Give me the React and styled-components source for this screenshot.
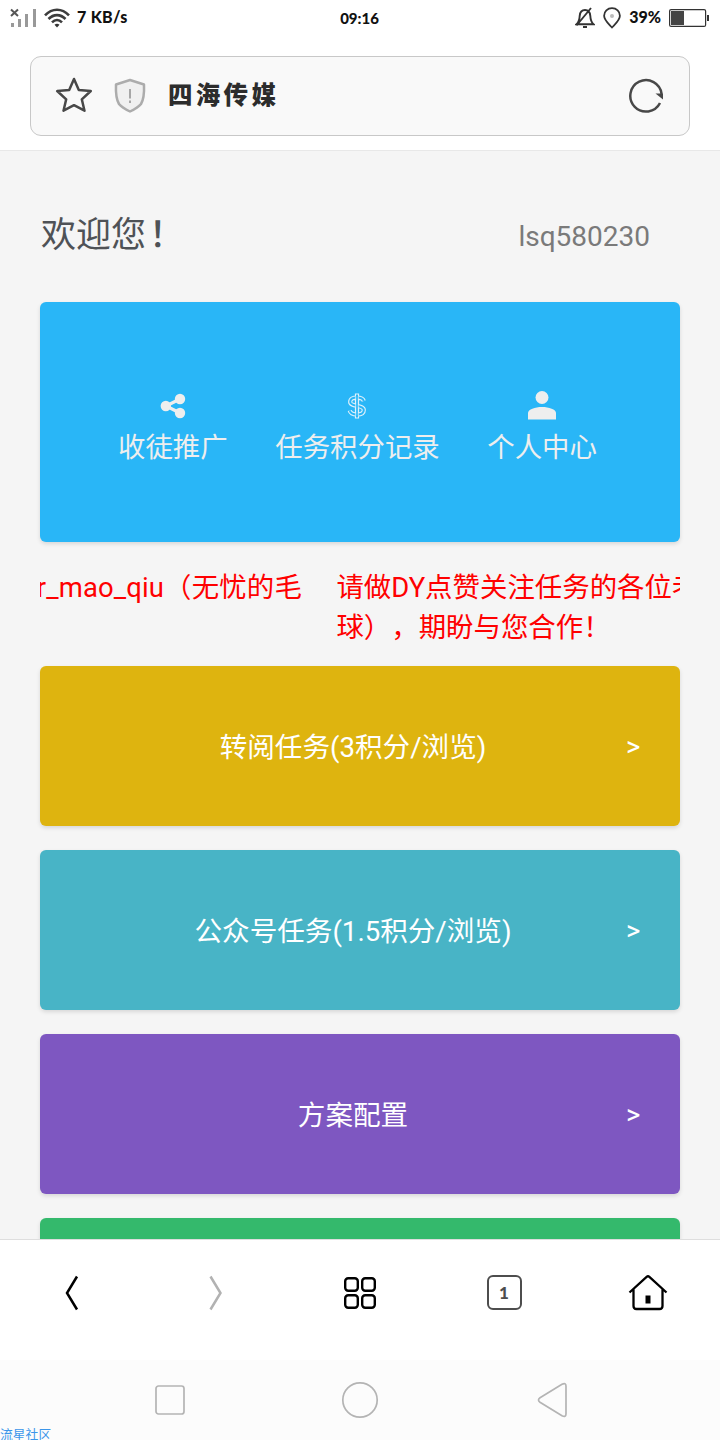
import React from "react";
import styled, { createGlobalStyle } from "styled-components";

const GlobalStyle = createGlobalStyle`
  * { box-sizing: border-box; }
  body {
    margin: 0;
    background: #fff;
    font-family: Roboto, "Noto Sans CJK SC", sans-serif;
    text-spacing-trim: space-all;
  }
  svg { display: block; flex: none; }
`;

const Screen = styled.div`
  position: relative;
  width: 720px;
  height: 1440px;
  display: flex;
  flex-direction: column;
  overflow: hidden;
  background: #fff;
`;

const StatusBar = styled.header`
  height: 36px;
  flex: none;
  display: grid;
  grid-template-columns: 1fr auto 1fr;
  align-items: center;
  padding: 0 11px 0 10px;
  color: #111;
`;

const StatusGroup = styled.div`
  display: flex;
  align-items: center;
  gap: ${(p) => p.$gap}px;
  justify-content: ${(p) => (p.$end ? "flex-end" : "flex-start")};
`;

const StatusText = styled.span`
  font: 900 ${(p) => p.$size || 16}px/20px Lato, sans-serif;
  letter-spacing: ${(p) => p.$spacing || 0}px;
  white-space: nowrap;
  padding-bottom: ${(p) => (p.$low ? 0 : 2)}px;
`;

const AddressArea = styled.div`
  height: 115px;
  flex: none;
  padding: 20px 30px 0;
  border-bottom: 1px solid #e8e8e8;
`;

const AddressBox = styled.div`
  height: 80px;
  display: flex;
  align-items: center;
  padding: 0 25px 2px 24px;
  border: 1px solid #c8c8c8;
  border-radius: 11px;
  background: #f9f9f9;
`;

const SiteTitle = styled.span`
  flex: 1;
  margin-left: 22px;
  padding-bottom: 2px;
  font: 900 24.5px/36px "Noto Sans CJK SC", sans-serif;
  letter-spacing: 3.3px;
  color: #2c2c2c;
`;

const Page = styled.main`
  flex: 1;
  min-height: 0;
  overflow: hidden;
  padding: 0 40px;
  background: #f5f5f5;
`;

const Welcome = styled.div`
  height: 151px;
  display: flex;
  justify-content: space-between;
  padding: 57px 30px 0 1px;
`;

const Greeting = styled.h1`
  margin: 0;
  padding-top: 2px;
  font-size: 35px;
  font-weight: 400;
  line-height: 52px;
  color: #4f5256;
`;

const Exclamation = styled.span`
  margin-left: 3px;
  font-weight: 500;
`;

const UserName = styled.span`
  padding-top: 9px;
  font-size: 28px;
  line-height: 40px;
  color: #7a7a7a;
`;

const Card = styled.section`
  display: flex;
  border-radius: 6px;
  background: ${(p) => p.$color};
  box-shadow: 0 2px 4px rgba(0, 0, 0, 0.12);
`;

const ShortcutCard = styled(Card)`
  height: 240px;
  justify-content: center;
  gap: 47.5px;
  padding: 85px 5px 0 0;
`;

const Shortcut = styled.div`
  display: flex;
  flex-direction: column;
  align-items: center;
  color: #eee;
`;

const IconSlot = styled.div`
  height: 36px;
  display: flex;
  align-items: center;
  padding: ${(p) => p.$inset || "0"};
`;

const ShortcutLabel = styled.span`
  font-size: 27.43px;
  line-height: 40px;
  margin-top: 5px;
`;

const Ticker = styled.div`
  height: 124px;
  display: flex;
  overflow: hidden;
  padding-top: 26px;
  color: #f00;
  font-size: 27.43px;
  line-height: 40px;
  white-space: nowrap;
`;

const TickerTail = styled.div`
  width: 296.4px;
  flex: none;
  display: flex;
  justify-content: flex-end;
  padding-right: 34.4px;
  letter-spacing: 0.15px;
`;

const TickerMessage = styled.div`
  flex: none;
`;

const TaskCard = styled(Card)`
  height: 160px;
  align-items: center;
  margin-bottom: 24px;
  padding: 4px 40px 0;
  color: #fff;
  font-size: 27.6px;
  line-height: 40px;
`;

const TaskName = styled.span`
  flex: 1;
  text-align: center;
`;

const Arrow = styled.span`
  width: 14px;
  padding-bottom: 2px;
  font-size: 27.43px;
`;

const BrowserBar = styled.nav`
  height: 121px;
  flex: none;
  display: grid;
  grid-template-columns: repeat(5, 1fr);
  justify-items: center;
  align-items: start;
  padding-top: 31px;
  border-top: 1px solid #dedede;
`;

const TabCount = styled.span`
  width: 35px;
  height: 35px;
  margin-top: 4px;
  border: 2.5px solid #4d4d4d;
  border-radius: 6px;
  font: 900 17px/32px Lato, sans-serif;
  text-align: center;
  color: #4d4d4d;
`;

const SystemBar = styled.footer`
  height: 80px;
  flex: none;
  display: grid;
  grid-template-columns: 190px 190px 198px;
  justify-items: center;
  align-items: center;
  padding-left: 75px;
  background: #fcfcfc;
`;

const Watermark = styled.span`
  position: absolute;
  left: 0;
  bottom: 0;
  font: 400 12.8px/13px "Noto Sans CJK SC", sans-serif;
  color: #3b96ea;
`;

const SignalIcon = () => (
  <svg width="27" height="20" viewBox="0 0 27 20">
    <path d="M1 1.500l7 6.500M8 1.500L1 8" stroke="#555" strokeWidth="2" />
    <path d="M1 15h3v4H1zM8 11h3v8H8zM15 6h3v13h-3zM23 1h3v18h-3z" fill="#999" />
  </svg>
);

const WifiIcon = () => (
  <svg width="26" height="20" viewBox="0 0 26 20">
    <g fill="none" stroke="#3d3d3d" strokeWidth="2.600">
      <path d="M1 7.300C8-.2 18-.2 25 7.300" />
      <path d="M4.500 11c5-5.200 12-5.200 17 0" />
      <path d="M8 14.300c3-3 7-3 10 0" />
    </g>
    <path d="M10.500 16.800q2.500-2 5 0L13 19.500z" fill="#333" />
  </svg>
);

const MutedBellIcon = () => (
  <svg width="20" height="22" viewBox="0 0 20 22" fill="none" stroke="#333" strokeWidth="1.900">
    <path d="M1.500 17.200h17c-2.500-2-3-4-3.200-8.400C15 5.200 13 3 10 3S5 5.200 4.700 8.800C4.500 13 4 15.200 1.500 17.200zM8 20h4M16 1L1.500 18.500" />
  </svg>
);

const PinIcon = () => (
  <svg width="18" height="22" viewBox="0 0 18 22">
    <path d="M9 1.200c-4.500 0-7.900 3.300-7.900 7.500C1.100 13 5.300 16.500 9 20.500c3.700-4 7.900-7.500 7.900-11.800 0-4.200-3.400-7.500-7.900-7.500z" fill="none" stroke="#333" strokeWidth="1.800" />
    <circle cx="9" cy="9" r="2" fill="#bbb" />
  </svg>
);

const BatteryIcon = () => (
  <svg width="40" height="18" viewBox="0 0 40 18">
    <rect x=".6" y=".6" width="36" height="16.800" rx="1.500" fill="#fff" stroke="#333" strokeWidth="1.200" />
    <path d="M2 2h13v14H2z" fill="#444" />
    <path d="M38 6h2v6h-2z" fill="#333" />
  </svg>
);

const StarIcon = () => (
  <svg width="38" height="38" viewBox="0 0 38 38">
    <path d="M19 3l4.800 11 12 1-9 8.300 2.700 11.400L19 29.200 8.500 34.700l2.700-11.400-9-8.300 12-1z" fill="none" stroke="#484848" strokeWidth="2.500" strokeLinejoin="round" />
  </svg>
);

const ShieldSvg = styled.svg`
  margin: 2px 0 0 21px;
`;

const ShieldIcon = () => (
  <ShieldSvg width="32" height="36" viewBox="0 0 32 36">
    <path d="M16 2l14 4.500c.4 9.500 0 14.500-3 19.500-2.200 3-7.500 5.800-11 7.500-3.500-1.700-8.800-4.500-11-7.500-3-5-3.400-10-3-19.500z" fill="#f0f0f0" stroke="#acacac" strokeWidth="2.500" strokeLinejoin="round" />
    <path d="M16 11v9.500M16 22.500V25" stroke="#a6a6a6" strokeWidth="2" />
  </ShieldSvg>
);

const ReloadIcon = () => (
  <svg width="36" height="36" viewBox="0 0 36 36">
    <path d="M32 26A15.700 15.700 0 1 1 33.600 17" fill="none" stroke="#484848" strokeWidth="2.500" />
    <path d="M27.500 16.500H35V22.500z" fill="#484848" />
  </svg>
);

const ShareIcon = () => (
  <svg width="26" height="26" viewBox="0 0 26 26">
    <path d="M20 6L6 13l14 7" fill="none" stroke="currentColor" strokeWidth="3.200" />
    <g fill="currentColor">
      <circle cx="20" cy="6" r="5.200" />
      <circle cx="5.800" cy="13" r="5.200" />
      <circle cx="20" cy="20" r="5.200" />
    </g>
  </svg>
);

const CoinIcon = () => (
  <svg width="20" height="26" viewBox="0 0 20 26" fill="none" strokeLinejoin="round">
    <g stroke="#dff1fb" strokeWidth="4.200">
      <path d="M16.800 8C16 5.500 13.500 4.600 10 4.600c-4 0-6.800 1.200-6.800 4.400 0 5 13.600 2.500 13.600 8 0 3.200-3 4.500-6.800 4.500-4 0-6.500-1-7.300-4M10 .5v25" />
    </g>
    <g stroke="#29b6f7" strokeWidth="2">
      <path d="M16.800 8C16 5.500 13.500 4.600 10 4.600c-4 0-6.800 1.200-6.800 4.400 0 5 13.600 2.500 13.600 8 0 3.200-3 4.500-6.800 4.500-4 0-6.500-1-7.300-4" />
      <path d="M10 1.500v23" />
    </g>
    <path d="M8.700 3.500v19M11.300 3.500v19" stroke="#dff1fb" strokeWidth=".8" />
  </svg>
);

const PersonIcon = () => (
  <svg width="28" height="30" viewBox="0 0 28 30" fill="currentColor">
    <circle cx="14" cy="7.500" r="6.500" />
    <path d="M0 29.500v-6.500c0-3.500 7-6 14-6s14 2.500 14 6v6.500z" />
  </svg>
);

const ChevronIcon = ({ forward }) => (
  <svg width="44" height="44" viewBox="0 0 44 44" fill="none" stroke={forward ? "#b2b2b2" : "#000"} strokeWidth="2.500">
    <path d={forward ? "M16.500 5.500L26.500 22l-10 16.500" : "M27 5.500L17 22l10 16.500"} />
  </svg>
);

const GridIcon = () => (
  <svg width="44" height="44" viewBox="0 0 44 44" fill="none" stroke="#000" strokeWidth="2.400">
    {[7.2, 24.2].map((y) =>
      [7.2, 24.2].map((x) => <rect key={`${x}-${y}`} x={x} y={y} width="12.600" height="12.600" rx="3" />)
    )}
  </svg>
);

const HomeIcon = () => (
  <svg width="44" height="44" viewBox="0 0 44 44" fill="none" stroke="#000" strokeWidth="2.300">
    <path d="M3.500 21.500L20.600 5.800q1.400-1.100 2.800 0L40.500 21.500M7.500 18v17q0 3 3 3h23q3 0 3-3V18" />
    <path d="M19.500 24.500h5v8h-5z" fill="#000" stroke="none" />
  </svg>
);

const RecentsIcon = () => (
  <svg width="40" height="40" viewBox="0 0 40 40">
    <rect x="6" y="6" width="28" height="28" rx="2.500" fill="none" stroke="#b4b4b4" strokeWidth="1.700" />
  </svg>
);

const CircleIcon = () => (
  <svg width="40" height="40" viewBox="0 0 40 40">
    <circle cx="20" cy="20" r="17.200" fill="none" stroke="#b4b4b4" strokeWidth="1.700" />
  </svg>
);

const BackIcon = () => (
  <svg width="36" height="40" viewBox="0 0 36 40">
    <path d="M4 17.800L26 4.300q4-2 4 2v27.400q0 4-4 2L4 22.200q-3-2.200 0-4.400z" fill="none" stroke="#b4b4b4" strokeWidth="1.700" />
  </svg>
);

const shortcuts = [
  { label: "收徒推广", icon: <ShareIcon />, inset: "2px 0 0 1px" },
  { label: "任务积分记录", icon: <CoinIcon />, inset: "2px 0 0" },
  { label: "个人中心", icon: <PersonIcon /> },
];

const tasks = [
  { name: "转阅任务(3积分/浏览)", color: "#deb40f" },
  { name: "公众号任务(1.5积分/浏览)", color: "#48b4c6" },
  { name: "方案配置", color: "#7e57c1" },
];

export default function App() {
  return (
    <Screen>
      <GlobalStyle />
      <StatusBar>
        <StatusGroup $gap={7}>
          <SignalIcon />
          <WifiIcon />
          <StatusText $spacing={0.3}>7 KB/s</StatusText>
        </StatusGroup>
        <StatusText $size={15} $low>09:16</StatusText>
        <StatusGroup $end $gap={8}>
          <MutedBellIcon />
          <PinIcon />
          <StatusText>39%</StatusText>
          <BatteryIcon />
        </StatusGroup>
      </StatusBar>

      <AddressArea>
        <AddressBox>
          <StarIcon />
          <ShieldIcon />
          <SiteTitle>四海传媒</SiteTitle>
          <ReloadIcon />
        </AddressBox>
      </AddressArea>

      <Page>
        <Welcome>
          <Greeting>
            欢迎您<Exclamation>！</Exclamation>
          </Greeting>
          <UserName>lsq580230</UserName>
        </Welcome>

        <ShortcutCard $color="#29b6f7">
          {shortcuts.map((s) => (
            <Shortcut key={s.label}>
              <IconSlot $inset={s.inset}>{s.icon}</IconSlot>
              <ShortcutLabel>{s.label}</ShortcutLabel>
            </Shortcut>
          ))}
        </ShortcutCard>

        <Ticker>
          <TickerTail>r_mao_qiu（无忧的毛</TickerTail>
          <TickerMessage>
            请做DY点赞关注任务的各位老
            <br />
            球），期盼与您合作！
          </TickerMessage>
        </Ticker>

        {tasks.map((t) => (
          <TaskCard key={t.name} $color={t.color}>
            <TaskName>{t.name}</TaskName>
            <Arrow>&gt;</Arrow>
          </TaskCard>
        ))}
        <TaskCard $color="#34b96c" />
      </Page>

      <BrowserBar>
        <ChevronIcon />
        <ChevronIcon forward />
        <GridIcon />
        <TabCount>1</TabCount>
        <HomeIcon />
      </BrowserBar>

      <SystemBar>
        <RecentsIcon />
        <CircleIcon />
        <BackIcon />
      </SystemBar>
      <Watermark>流星社区</Watermark>
    </Screen>
  );
}
